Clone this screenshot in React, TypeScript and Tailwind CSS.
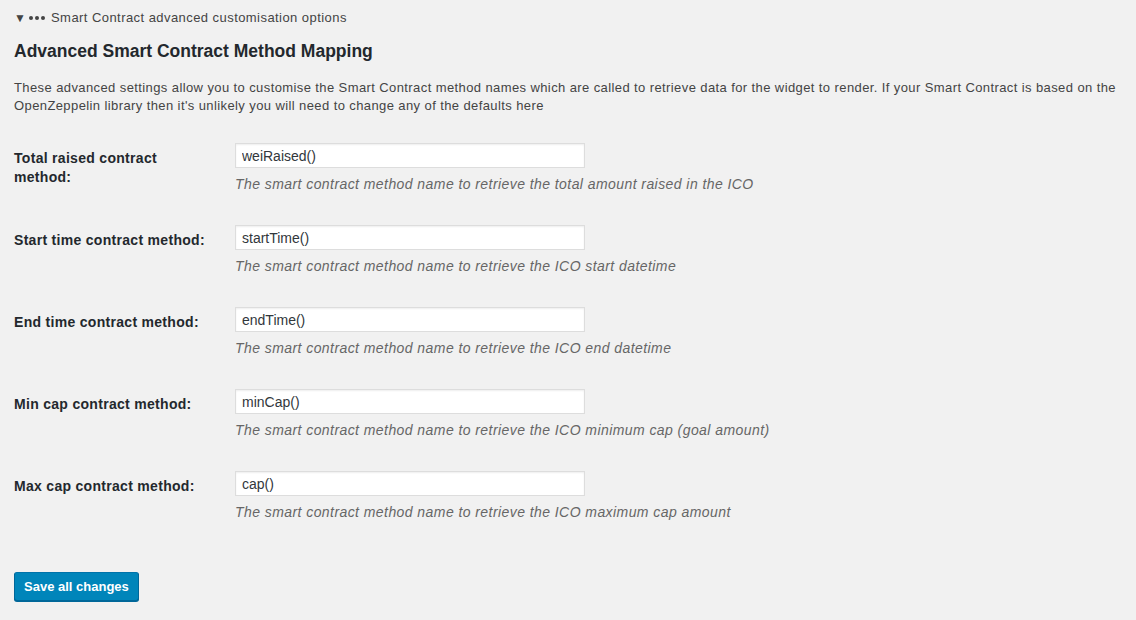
import React from 'react';

const rows = [
  {
    label: 'Total raised contract method:',
    value: 'weiRaised()',
    desc: 'The smart contract method name to retrieve the total amount raised in the ICO',
  },
  {
    label: 'Start time contract method:',
    value: 'startTime()',
    desc: 'The smart contract method name to retrieve the ICO start datetime',
  },
  {
    label: 'End time contract method:',
    value: 'endTime()',
    desc: 'The smart contract method name to retrieve the ICO end datetime',
  },
  {
    label: 'Min cap contract method:',
    value: 'minCap()',
    desc: 'The smart contract method name to retrieve the ICO minimum cap (goal amount)',
  },
  {
    label: 'Max cap contract method:',
    value: 'cap()',
    desc: 'The smart contract method name to retrieve the ICO maximum cap amount',
  },
];

export default function App() {
  return (
    <div className="min-h-[620px] w-full bg-[#f1f1f1] px-[14px] pt-[9px] font-['Liberation_Sans',Arial,sans-serif] text-[#444]">
      {/* collapsible summary */}
      <div className="flex items-center text-[13px] leading-[18px] text-[#444]">
        <span className="w-[15px] text-[12px] leading-[18px]">▼</span>
        <span className="flex w-[22px] gap-[2px]">
          <span className="h-[4px] w-[4px] rounded-full bg-[#444]" />
          <span className="h-[4px] w-[4px] rounded-full bg-[#444]" />
          <span className="h-[4px] w-[4px] rounded-full bg-[#444]" />
        </span>
        <span className="tracking-[0.44px]">Smart Contract advanced customisation options</span>
      </div>

      <h2 className="mt-[13px] text-[17.5px] font-bold leading-[22px] text-[#23282d]">
        Advanced Smart Contract Method Mapping
      </h2>

      <p className="mt-[17px] text-[13px] leading-[18px] tracking-[0.4px] text-[#444]">
        These advanced settings allow you to customise the Smart Contract method names which are called to retrieve data for the widget to render. If your Smart Contract is based on the OpenZeppelin library then it's unlikely you will need to change any of the defaults here
      </p>

      {/* form table */}
      <div className="mt-[15px] flex flex-col">
        {rows.map((row, idx) => (
          <div key={idx} className="flex h-[82px]">
            <div className="w-[221px] shrink-0 pr-[10px] pt-[19px] text-[14px] font-bold leading-[19px] tracking-[0.3px] text-[#23282d]">
              <div className="w-[200px]">{row.label}</div>
            </div>
            <div className="pt-[13px]">
              <input
                type="text"
                defaultValue={row.value}
                className="block h-[25px] w-[350px] border border-[#ddd] bg-white px-[6px] text-[14px] text-[#32373c] shadow-[inset_0_1px_2px_rgba(0,0,0,0.07)] outline-none"
              />
              <p className="mt-[6px] text-[14px] italic leading-[20px] tracking-[0.43px] text-[#666]">{row.desc}</p>
            </div>
          </div>
        ))}
      </div>

      <button className="mt-[32px] h-[29px] rounded-[3px] border border-[#006799] border-t-[#0073aa] bg-[#0085ba] px-[9px] text-[13px] font-bold text-white shadow-[0_1px_0_#006799]">
        Save all changes
      </button>
    </div>
  );
}
